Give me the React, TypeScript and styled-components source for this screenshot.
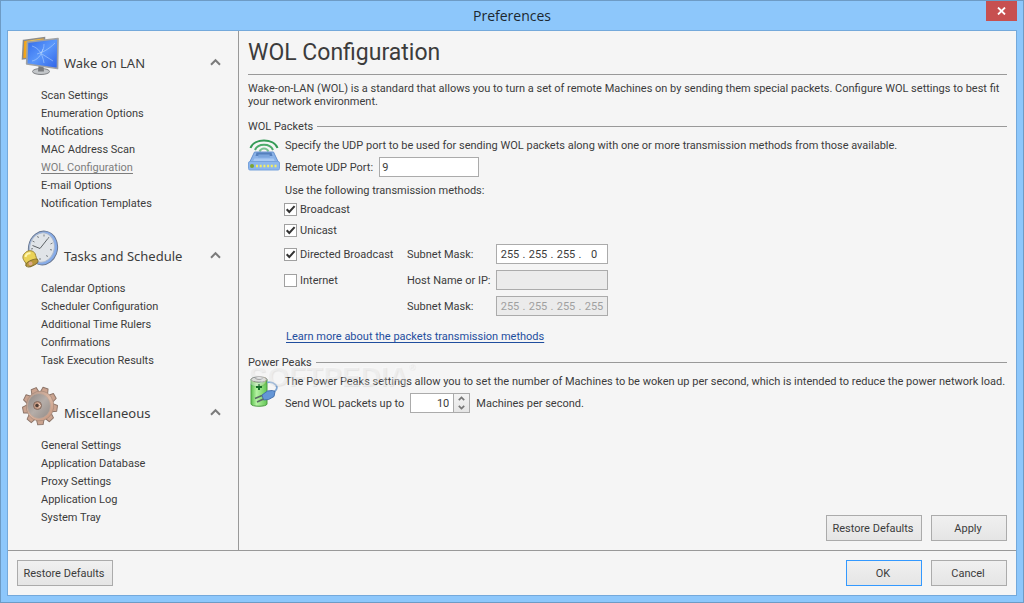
import React, { useId, useState } from 'react';
import styled, { createGlobalStyle } from 'styled-components';

const uiFont = 'Roboto, "Liberation Sans", sans-serif';
const ink = '#3c3c3c';
const rule = '#999999';
const edge = '#ababab';

const GlobalStyle = createGlobalStyle`
  *, *::before, *::after { box-sizing: border-box; }
  body {
    margin: 0;
    background: #8dc7fb;
    color: ${ink};
    font: 11px/13px ${uiFont};
  }
  button, input { font: inherit; color: inherit; }
`;

const Window = styled.div`
  display: flex;
  flex-direction: column;
  min-height: 100vh;
  padding: 0 6px 6px;
  border: 1px solid #6d9bc5;
  background: #8dc7fb;
`;

const TitleBar = styled.header`
  display: grid;
  grid-template-columns: 1fr auto 1fr;
  height: 29px;
`;

const WindowTitle = styled.h1`
  grid-column: 2;
  margin: 0;
  padding-top: 5px;
  font: 400 14px/20px "Open Sans", sans-serif;
  color: #1c2730;
`;

const CloseButton = styled.button`
  justify-self: end;
  display: grid;
  place-items: center;
  width: 31px;
  height: 20px;
  padding: 0;
  border: 0;
  background: #c75050;
`;

const Client = styled.div`
  flex: 1;
  display: flex;
  flex-direction: column;
  border: 1px solid #74a9db;
  background: #f5f5f5;
`;

const Body = styled.div`
  flex: 1;
  display: flex;
`;

const Sidebar = styled.nav`
  flex: 0 0 231px;
  padding: 5px 16px 0 12px;
  border-right: 1px solid ${rule};
`;

const Section = styled.section`
  padding-bottom: 16px;
`;

const SectionHeader = styled.div`
  display: flex;
  align-items: flex-end;
  gap: 4px;
  height: 40px;
  margin-bottom: 11px;
`;

const SectionTitle = styled.h2`
  flex: 1;
  margin: 0;
  padding-bottom: 4px;
  font: 400 13px/18px "Noto Sans", sans-serif;
`;

const CollapseButton = styled.button`
  display: grid;
  place-items: center;
  width: 14px;
  height: 28px;
  padding: 0;
  border: 0;
  background: none;
`;

const LinkList = styled.ul`
  margin: 0;
  padding: 0 0 0 21px;
  list-style: none;
  line-height: 18px;
`;

const NavLink = styled.a<{ $active?: boolean }>`
  color: ${(p) => (p.$active ? '#7d7d7d' : ink)};
  text-decoration: ${(p) => (p.$active ? 'underline' : 'none')};
  text-underline-offset: 2px;
`;

const Main = styled.main`
  flex: 1;
  display: flex;
  flex-direction: column;
  padding: 6px 9px 9px;
`;

const PageTitle = styled.h2`
  margin: 0 0 7px;
  padding-bottom: 5px;
  border-bottom: 1px solid ${rule};
  font: 400 23px/32px ${uiFont};
`;

const Intro = styled.p`
  margin: 0 0 12px;
`;

const Group = styled.section`
  margin-bottom: 13px;
`;

const GroupTitle = styled.h3`
  display: flex;
  align-items: center;
  gap: 4px;
  margin: 0 0 6px;
  font: inherit;

  &::after {
    content: '';
    flex: 1;
    height: 1px;
    background: ${rule};
  }
`;

const GroupBody = styled.div`
  display: flex;
  gap: 5px;
`;

const GroupContent = styled.div`
  flex: 1;
`;

const Text = styled.p`
  margin: 0;
`;

const FieldRow = styled.div<{ $gap: number }>`
  display: flex;
  align-items: center;
  gap: ${(p) => p.$gap}px;
  margin: 5px 0 7px;
`;

const TextInput = styled.input<{ $width: number }>`
  width: ${(p) => p.$width}px;
  height: 20px;
  padding: 0 2px;
  border: 1px solid ${edge};
  background: #fff;
  outline: 0;

  &:disabled { background: #ebebeb; }
`;

const Methods = styled.div`
  display: grid;
  grid-template-columns: 123px 89px 112px;
  align-items: center;
  row-gap: 6px;
  margin: 5px 0 14px -1px;
`;

const CheckLabel = styled.label<{ $wide?: boolean }>`
  grid-column: ${(p) => (p.$wide ? '1 / -1' : '1')};
  display: flex;
  align-items: center;
  gap: 3px;
  height: 15px;
`;

const CheckInput = styled.input`
  appearance: none;
  width: 13px;
  height: 13px;
  margin: 0;
  border: 1px solid #a0a0a0;
  background: #fff;

  &:checked {
    background: #fff url("data:image/svg+xml,%3Csvg xmlns='http://www.w3.org/2000/svg' viewBox='0 0 11 11'%3E%3Cpath d='M1.7 5.2 4.3 8 9.6 2.2' fill='none' stroke='%23333' stroke-width='2'/%3E%3C/svg%3E");
  }
`;

const FieldLabel = styled.label`
  grid-column: 2;
`;

const AddressBox = styled.div<{ $disabled?: boolean }>`
  display: flex;
  align-items: center;
  width: 112px;
  height: 20px;
  padding: 0 2px;
  border: 1px solid ${edge};
  background: ${(p) => (p.$disabled ? '#ebebeb' : '#fff')};
  color: ${(p) => (p.$disabled ? '#a0a0a0' : ink)};
`;

const Octet = styled.input`
  flex: 1;
  width: 0;
  padding: 0;
  border: 0;
  background: none;
  text-align: center;
  outline: 0;
`;

const Dot = styled.span`
  width: 6px;
  text-align: center;
`;

const HelpLink = styled.a`
  margin-left: 1px;
  color: #1f4e9e;
  text-underline-offset: 2px;
`;

const SpinBox = styled.div`
  display: flex;
  width: 60px;
  height: 20px;
  border: 1px solid ${edge};
  background: #fff;
`;

const SpinInput = styled.input`
  flex: 1;
  width: 0;
  padding: 0 4px;
  border: 0;
  background: none;
  text-align: right;
  outline: 0;
`;

const SpinButtons = styled.div`
  display: grid;
  grid-template-rows: 1fr 1fr;
  width: 16px;
  border-left: 1px solid ${edge};
  background: linear-gradient(#f4f4f4, #e5e5e5);
`;

const SpinButton = styled.button`
  display: grid;
  place-items: center;
  padding: 0;
  border: 0;
  background: none;
`;

const PeaksGroup = styled(Group)`
  position: relative;
`;

const Watermark = styled.div`
  position: absolute;
  top: 5px;
  left: 0;
  display: flex;
  font: 700 28px/32px "Liberation Sans", sans-serif;
  color: rgba(255, 255, 255, 0.35);
  text-shadow: 1px 1px 1px rgba(0, 0, 0, 0.07);
  pointer-events: none;

  sup { font-size: 9px; line-height: 12px; }
`;

const ButtonBar = styled.div`
  display: flex;
  gap: 9px;
  justify-content: flex-end;
  margin-top: auto;
`;

const Footer = styled.footer`
  display: flex;
  gap: 9px;
  padding: 9px;
  border-top: 1px solid ${rule};
`;

const Spacer = styled.div`
  flex: 1;
`;

const PushButton = styled.button<{ $wide?: boolean; $primary?: boolean }>`
  width: ${(p) => (p.$wide ? 96 : 76)}px;
  height: 26px;
  padding: 0 2px 0 0;
  border: 1px solid ${(p) => (p.$primary ? '#3399ff' : edge)};
  background: linear-gradient(#f0f0f0, #e5e5e5);
`;

const Chevron = () => (
  <svg width="12" height="8" viewBox="0 0 12 8" aria-hidden="true">
    <path d="M2 6.700 6.500 2.200 11 6.700" fill="none" stroke="#7b7b7b" strokeWidth="2" />
  </svg>
);

const SpinArrow = ({ down = false }: { down?: boolean }) => (
  <svg width="7" height="5" viewBox="0 0 7 5" aria-hidden="true">
    <path d={down ? 'M.8 .8 3.500 3.500 6.200 .8' : 'M.8 4.200 3.500 1.500 6.200 4.200'} fill="none" stroke="#777" strokeWidth="1.700" />
  </svg>
);

const MonitorsIcon = () => (
  <svg width="40" height="40" viewBox="0 0 40 40" aria-hidden="true">
    <defs>
      <linearGradient id="screen" x1="0" y1="0" x2="1" y2="1">
        <stop offset="0" stopColor="#2f68ea" />
        <stop offset=".5" stopColor="#5a97fb" />
        <stop offset="1" stopColor="#2f62e6" />
      </linearGradient>
      <linearGradient id="amber" x1="0" x2="1">
        <stop offset="0" stopColor="#ef9a10" />
        <stop offset=".5" stopColor="#ffd048" />
        <stop offset="1" stopColor="#f3a21c" />
      </linearGradient>
    </defs>
    <path d="M3.500 4.500 24.500 1.500V20L2.500 23z" fill="url(#amber)" stroke="#8c8c8c" strokeWidth="1.500" />
    <ellipse cx="21" cy="35.500" rx="8.500" ry="3" fill="#c3c6c9" stroke="#808285" />
    <path d="M18.500 30h5l.5 5.500h-6z" fill="#77797c" />
    <path d="M7.500 6.200 38 2.500 37.500 32.500 6.700 28z" fill="url(#screen)" stroke="#a0a2a4" strokeWidth="1.700" strokeLinejoin="round" />
    <path d="M12 10c6 2 10 6 12 17M17 18c6-2 11-4 18-11M12 25c5-1 9-5 11-12M22 18l11 7M24 8c0 4-1 6-3 9" fill="none" stroke="#cfe6ff" strokeOpacity=".45" />
  </svg>
);

const ClockIcon = () => (
  <svg width="40" height="40" viewBox="0 0 40 40" aria-hidden="true">
    <ellipse cx="23" cy="19" rx="14.500" ry="17" transform="rotate(12 23 19)" fill="#86acea" stroke="#6a7890" />
    <ellipse cx="22" cy="18.500" rx="12.300" ry="14.800" transform="rotate(12 22 18.500)" fill="#e0e4e8" stroke="#a9b8cf" />
    <g stroke="#7b8084">
      <path d="M24 5.500v2M29 8l-1.300 2M32.500 14l-2 1M32 21l-2-.4M27.500 28l-1-2M20 31v-2M11 20l2-.4M12.500 12l2 1M17.500 7l1 2" />
      <path d="M12.500 16.500 20 19.500 27.500 10" fill="none" stroke="#5d6266" />
    </g>
    <path d="M5.500 23.500c3-3 8-2 9.500 1 1 3 1.500 5 2.500 6.500L6 37c.5-3-.5-3-2-5.500-2-3-1-6 1.500-8z" fill="#ead257" stroke="#9a8436" />
    <path d="M5.500 28c.5-3 3-4 5-3.500" fill="none" stroke="#fff6ae" strokeWidth="2" />
    <ellipse cx="12" cy="34" rx="6.500" ry="2.800" transform="rotate(-26 12 34)" fill="#b8973a" stroke="#84702f" />
    <circle cx="10.500" cy="34.500" r="2" fill="#dba98a" />
  </svg>
);

const gearTeeth = [10, 50, 90, 130, 170, 210, 250, 290, 330];

const GearIcon = () => (
  <svg width="40" height="40" viewBox="0 0 40 40" aria-hidden="true">
    <defs>
      <linearGradient id="copper" x1="0" y1="0" x2="1" y2="1">
        <stop offset="0" stopColor="#b39384" />
        <stop offset=".5" stopColor="#dbb8a4" />
        <stop offset="1" stopColor="#c19078" />
      </linearGradient>
      <linearGradient id="disc" x1="0" y1="0" x2="1" y2="1">
        <stop offset="0" stopColor="#8d8683" />
        <stop offset=".5" stopColor="#b5ada8" />
        <stop offset="1" stopColor="#928b87" />
      </linearGradient>
    </defs>
    <g transform="translate(20 20) rotate(8) scale(.95 1.030)">
      {gearTeeth.map((angle) => (
        <path key={angle} d="M-4-13-2.800-18.200h5.600L4-13z" transform={`rotate(${angle})`} fill="#cba490" stroke="#8c7468" strokeLinejoin="round" />
      ))}
      <circle r="14.500" fill="url(#copper)" stroke="#a08678" strokeWidth=".6" />
    </g>
    <ellipse cx="19" cy="20" rx="11.500" ry="12.500" fill="url(#disc)" stroke="#c2a696" strokeWidth=".7" />
    <circle cx="17.500" cy="19.500" r="4" fill="#c79c85" stroke="#806a60" />
    <circle cx="17" cy="19.500" r="1.700" fill="#4c3d36" />
    <path d="M18.500 17.500l2 2-1.500 2" fill="none" stroke="#f1d8c8" />
  </svg>
);

const RouterIcon = () => (
  <svg width="32" height="33" viewBox="0 0 32 33" aria-hidden="true">
    <g fill="none" stroke="#349a55" strokeWidth="2">
      <path d="M2.500 9C6-1 26-1 29.500 9" />
      <path d="M7 11C10 4 22 4 25 11" stroke="#4dab6a" />
      <path d="M11.500 12.500c2-4 7-4 9 0" stroke="#7cc392" />
    </g>
    <path d="M6.500 13h19l5 10.500h-29z" fill="#8bb3e8" stroke="#6894d0" />
    <path d="M8.500 13.500h15l1 3.500H7.500z" fill="#5580bd" />
    <path d="M10.500 15.500h11l.5 3H10z" fill="#7ba5dd" />
    <path d="M6.500 19.500h19l1.500 3H5z" fill="#a9caf3" />
    <rect x=".5" y="22.500" width="31" height="8.500" rx="1.500" fill="#8cb6ec" stroke="#78a3dc" />
    <circle cx="4" cy="27" r="2" fill="#7aa334" />
    <path d="M8 27h22" stroke="#f2ed62" strokeWidth="2.400" strokeDasharray="2 1.700" />
  </svg>
);

const BatteryIcon = () => (
  <svg width="32" height="33" viewBox="0 0 32 33" aria-hidden="true">
    <defs>
      <linearGradient id="cell" x1="0" x2="1">
        <stop offset="0" stopColor="#5cc04e" />
        <stop offset=".35" stopColor="#b5f2a2" />
        <stop offset="1" stopColor="#62c654" />
      </linearGradient>
    </defs>
    <path d="M3 4.500V29c0 3 16 3 16 0V4.500z" fill="url(#cell)" stroke="#4c9b43" />
    <ellipse cx="11" cy="4.500" rx="8" ry="2.700" fill="#dadcda" stroke="#858a85" />
    <ellipse cx="11" cy="3" rx="3.500" ry="1.400" fill="#f5f5f5" stroke="#9b9b9b" />
    <path d="M11 9v6M8 12h6" stroke="#17702a" strokeWidth="2" />
    <path d="M19 7.500c6-1.500 14 4 7.500 9" fill="none" stroke="#7fa6d4" strokeWidth="1.800" />
    <path d="M14 20l5.500-4 5-.5 2.500 1-1 5-5.500 3-5 .5z" fill="#6496d6" stroke="#4672ae" />
    <path d="M14 20.500 7 23.500M15.500 24 9 27" stroke="#5a6a66" strokeWidth="1.600" />
  </svg>
);

const sections = [
  {
    title: 'Wake on LAN',
    icon: <MonitorsIcon />,
    items: ['Scan Settings', 'Enumeration Options', 'Notifications', 'MAC Address Scan', 'WOL Configuration', 'E-mail Options', 'Notification Templates'],
  },
  {
    title: 'Tasks and Schedule',
    icon: <ClockIcon />,
    items: ['Calendar Options', 'Scheduler Configuration', 'Additional Time Rulers', 'Confirmations', 'Task Execution Results'],
  },
  {
    title: 'Miscellaneous',
    icon: <GearIcon />,
    items: ['General Settings', 'Application Database', 'Proxy Settings', 'Application Log', 'System Tray'],
  },
];

function CheckBox({ label, checked = false, wide }: { label: string; checked?: boolean; wide?: boolean }) {
  return (
    <CheckLabel $wide={wide}>
      <CheckInput type="checkbox" defaultChecked={checked} />
      {label}
    </CheckLabel>
  );
}

function AddressField({ id, octets, disabled }: { id: string; octets: string[]; disabled?: boolean }) {
  return (
    <AddressBox $disabled={disabled} role="group">
      {octets.map((octet, i) => (
        <React.Fragment key={i}>
          {i > 0 && <Dot>.</Dot>}
          <Octet
            id={i === 0 ? id : undefined}
            aria-label={i === 0 ? undefined : `Octet ${i + 1}`}
            defaultValue={octet}
            disabled={disabled}
          />
        </React.Fragment>
      ))}
    </AddressBox>
  );
}

export default function App() {
  const id = useId();
  const [rate, setRate] = useState(10);

  return (
    <>
      <GlobalStyle />
      <Window>
        <TitleBar>
          <WindowTitle>Preferences</WindowTitle>
          <CloseButton aria-label="Close">
            <svg width="9" height="8" viewBox="0 0 9 8" aria-hidden="true">
              <path d="M1 .5 8 7.500M8 .5 1 7.500" stroke="#fff" strokeWidth="1.800" />
            </svg>
          </CloseButton>
        </TitleBar>
        <Client>
          <Body>
            <Sidebar>
              {sections.map((section) => (
                <Section key={section.title}>
                  <SectionHeader>
                    {section.icon}
                    <SectionTitle>{section.title}</SectionTitle>
                    <CollapseButton aria-label={`Collapse ${section.title}`}>
                      <Chevron />
                    </CollapseButton>
                  </SectionHeader>
                  <LinkList>
                    {section.items.map((item) => (
                      <li key={item}>
                        <NavLink href="#" $active={item === 'WOL Configuration'}>{item}</NavLink>
                      </li>
                    ))}
                  </LinkList>
                </Section>
              ))}
            </Sidebar>
            <Main>
              <PageTitle>WOL Configuration</PageTitle>
              <Intro>
                Wake-on-LAN (WOL) is a standard that allows you to turn a set of remote Machines on by sending them special packets. Configure WOL settings to best fit your network environment.
              </Intro>

              <Group>
                <GroupTitle>WOL Packets</GroupTitle>
                <GroupBody>
                  <RouterIcon />
                  <GroupContent>
                    <Text>Specify the UDP port to be used for sending WOL packets along with one or more transmission methods from those available.</Text>
                    <FieldRow $gap={6}>
                      <label htmlFor={`${id}port`}>Remote UDP Port:</label>
                      <TextInput id={`${id}port`} $width={100} defaultValue="9" />
                    </FieldRow>
                    <Text>Use the following transmission methods:</Text>
                    <Methods>
                      <CheckBox label="Broadcast" checked wide />
                      <CheckBox label="Unicast" checked wide />
                      <CheckBox label="Directed Broadcast" checked />
                      <FieldLabel htmlFor={`${id}mask`}>Subnet Mask:</FieldLabel>
                      <AddressField id={`${id}mask`} octets={['255', '255', '255', '0']} />
                      <CheckBox label="Internet" />
                      <FieldLabel htmlFor={`${id}host`}>Host Name or IP:</FieldLabel>
                      <TextInput id={`${id}host`} $width={112} disabled />
                      <FieldLabel htmlFor={`${id}hostmask`}>Subnet Mask:</FieldLabel>
                      <AddressField id={`${id}hostmask`} octets={['255', '255', '255', '255']} disabled />
                    </Methods>
                    <HelpLink href="#">Learn more about the packets transmission methods</HelpLink>
                  </GroupContent>
                </GroupBody>
              </Group>

              <PeaksGroup>
                <GroupTitle>Power Peaks</GroupTitle>
                <GroupBody>
                  <BatteryIcon />
                  <GroupContent>
                    <Text>The Power Peaks settings allow you to set the number of Machines to be woken up per second, which is intended to reduce the power network load.</Text>
                    <FieldRow $gap={6}>
                      <label htmlFor={`${id}rate`}>Send WOL packets up to</label>
                      <SpinBox>
                        <SpinInput id={`${id}rate`} value={rate} onChange={(e) => setRate(Number(e.target.value) || 0)} />
                        <SpinButtons>
                          <SpinButton aria-label="Increase" onClick={() => setRate(rate + 1)}><SpinArrow /></SpinButton>
                          <SpinButton aria-label="Decrease" onClick={() => setRate(Math.max(0, rate - 1))}><SpinArrow down /></SpinButton>
                        </SpinButtons>
                      </SpinBox>
                      <span>Machines per second.</span>
                    </FieldRow>
                  </GroupContent>
                </GroupBody>
                <Watermark aria-hidden="true">SOFTPEDIA<sup>®</sup></Watermark>
              </PeaksGroup>

              <ButtonBar>
                <PushButton $wide>Restore Defaults</PushButton>
                <PushButton>Apply</PushButton>
              </ButtonBar>
            </Main>
          </Body>
          <Footer>
            <PushButton $wide>Restore Defaults</PushButton>
            <Spacer />
            <PushButton $primary>OK</PushButton>
            <PushButton>Cancel</PushButton>
          </Footer>
        </Client>
      </Window>
    </>
  );
}
